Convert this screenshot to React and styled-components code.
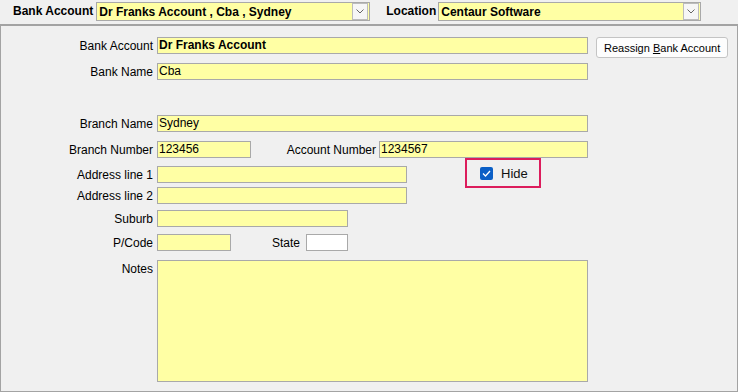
import React from "react";
import styled, { createGlobalStyle } from "styled-components";

const Global = createGlobalStyle`
  html, body { margin: 0; padding: 0; background: #f0f0f0; }
  body { font-family: "Liberation Sans", Arial, sans-serif; font-size: 12px; color: #000; }
  * { box-sizing: border-box; }
`;

const Page = styled.div`
  width: 738px;
  height: 392px;
  display: flex;
  flex-direction: column;
  background: #f0f0f0;
`;

const TopBar = styled.div`
  height: 26px;
  display: flex;
  align-items: flex-start;
  padding: 2px 0 0 13px;
  border-bottom: 2px solid #a3a3a3;
`;

const BarLabel = styled.span`
  font-weight: bold;
  font-size: 12px;
  line-height: 18px;
  margin-left: ${(p) => p.$ml || 0}px;
  margin-right: ${(p) => p.$mr || 3}px;
`;

const Combo = styled.div`
  width: ${(p) => p.$w}px;
  height: 19px;
  background: #ffffa4;
  border: 1px solid #a9a9a9;
  display: flex;
  align-items: center;
  padding-left: 2px;
  font-weight: bold;
  font-size: 12px;
`;

const ComboText = styled.span`
  flex: 1;
  white-space: nowrap;
  overflow: hidden;
`;

const ComboButton = styled.div`
  width: 16px;
  height: 17px;
  margin-right: 1px;
  background: #f6f6f6;
  border: 1px solid #bcbcbc;
  display: flex;
  align-items: center;
  justify-content: center;
`;

const Panel = styled.div`
  flex: 1;
  border: 1px solid #a3a3a3;
  border-top: none;
  padding-top: 11px;
  display: flex;
  flex-direction: column;
`;

const Row = styled.div`
  display: flex;
  align-items: center;
  height: ${(p) => p.$h || 17}px;
  margin-top: ${(p) => p.$mt || 0}px;
`;

const Label = styled.label`
  width: ${(p) => p.$w || 157}px;
  padding-right: ${(p) => p.$pr || 4}px;
  text-align: right;
  font-size: 12px;
  white-space: nowrap;
  align-self: ${(p) => (p.$top ? "flex-start" : "center")};
  line-height: ${(p) => (p.$top ? "18px" : "normal")};
`;

const Field = styled.div`
  width: ${(p) => p.$w}px;
  height: ${(p) => p.$h || 17}px;
  align-self: flex-start;
  background: ${(p) => (p.$white ? "#ffffff" : "#ffffa4")};
  border: 1px solid #a9a9a9;
  padding: 0 1px;
  font-size: 12px;
  line-height: 15px;
  font-weight: ${(p) => (p.$bold ? "bold" : "normal")};
  white-space: nowrap;
  overflow: hidden;
`;

const Button = styled.button`
  align-self: flex-start;
  margin-left: 8px;
  height: 21px;
  padding: 0 7px;
  background: #fdfdfd;
  border: 1px solid #c4c4c4;
  border-radius: 3px;
  font-family: "Liberation Sans", Arial, sans-serif;
  font-size: 11px;
  color: #000;
  white-space: nowrap;
  u { text-decoration: underline; }
`;

const Highlight = styled.div`
  align-self: flex-start;
  margin: -8px 0 0 58px;
  width: 76px;
  height: 30px;
  border: 2px solid #dc1c5c;
  display: flex;
  align-items: center;
  padding-left: 13px;
  gap: 8px;
`;

const CheckBox = styled.span`
  width: 13px;
  height: 13px;
  border-radius: 2px;
  background: #0b5fc6;
  display: inline-flex;
  align-items: center;
  justify-content: center;
`;

const CheckLabel = styled.span`
  font-size: 13px;
  color: #111;
`;

const Chevron = () => (
  <svg width="8" height="5" viewBox="0 0 8 5">
    <path d="M0.5 0.5 L4 4 L7.5 0.5" fill="none" stroke="#666" strokeWidth="1" />
  </svg>
);

export default function App() {
  return (
    <>
      <Global />
      <Page>
        <TopBar>
          <BarLabel>Bank Account</BarLabel>
          <Combo $w={274}>
            <ComboText>Dr Franks Account , Cba , Sydney</ComboText>
            <ComboButton><Chevron /></ComboButton>
          </Combo>
          <BarLabel $ml={16} $mr={2}>Location</BarLabel>
          <Combo $w={263}>
            <ComboText>Centaur Software</ComboText>
            <ComboButton><Chevron /></ComboButton>
          </Combo>
        </TopBar>
        <Panel>
          <Row>
            <Label $w={156}>Bank Account</Label>
            <Field $w={431} $bold>Dr Franks Account</Field>
            <Button>Reassign <u>B</u>ank Account</Button>
          </Row>
          <Row $mt={9}>
            <Label $w={156}>Bank Name</Label>
            <Field $w={431}>Cba</Field>
          </Row>
          <Row $mt={35}>
            <Label $w={156}>Branch Name</Label>
            <Field $w={431}>Sydney</Field>
          </Row>
          <Row $mt={9}>
            <Label $w={156}>Branch Number</Label>
            <Field $w={94}>123456</Field>
            <Label $w={128} $pr={3}>Account Number</Label>
            <Field $w={209}>1234567</Field>
          </Row>
          <Row $mt={8}>
            <Label $w={156}>Address line 1</Label>
            <Field $w={250}></Field>
            <Highlight>
              <CheckBox>
                <svg width="9" height="7" viewBox="0 0 9 7">
                  <path d="M1 3.5 L3.5 6 L8 1" fill="none" stroke="#fff" strokeWidth="1.3" />
                </svg>
              </CheckBox>
              <CheckLabel>Hide</CheckLabel>
            </Highlight>
          </Row>
          <Row $mt={4}>
            <Label $w={156}>Address line 2</Label>
            <Field $w={250}></Field>
          </Row>
          <Row $mt={6}>
            <Label $w={156}>Suburb</Label>
            <Field $w={191}></Field>
          </Row>
          <Row $mt={7}>
            <Label $w={156}>P/Code</Label>
            <Field $w={74}></Field>
            <Label $w={75} $pr={6}>State</Label>
            <Field $w={42} $white></Field>
          </Row>
          <Row $mt={9} $h={122}>
            <Label $w={156} $top>Notes</Label>
            <Field $w={431} $h={122}></Field>
          </Row>
        </Panel>
      </Page>
    </>
  );
}
